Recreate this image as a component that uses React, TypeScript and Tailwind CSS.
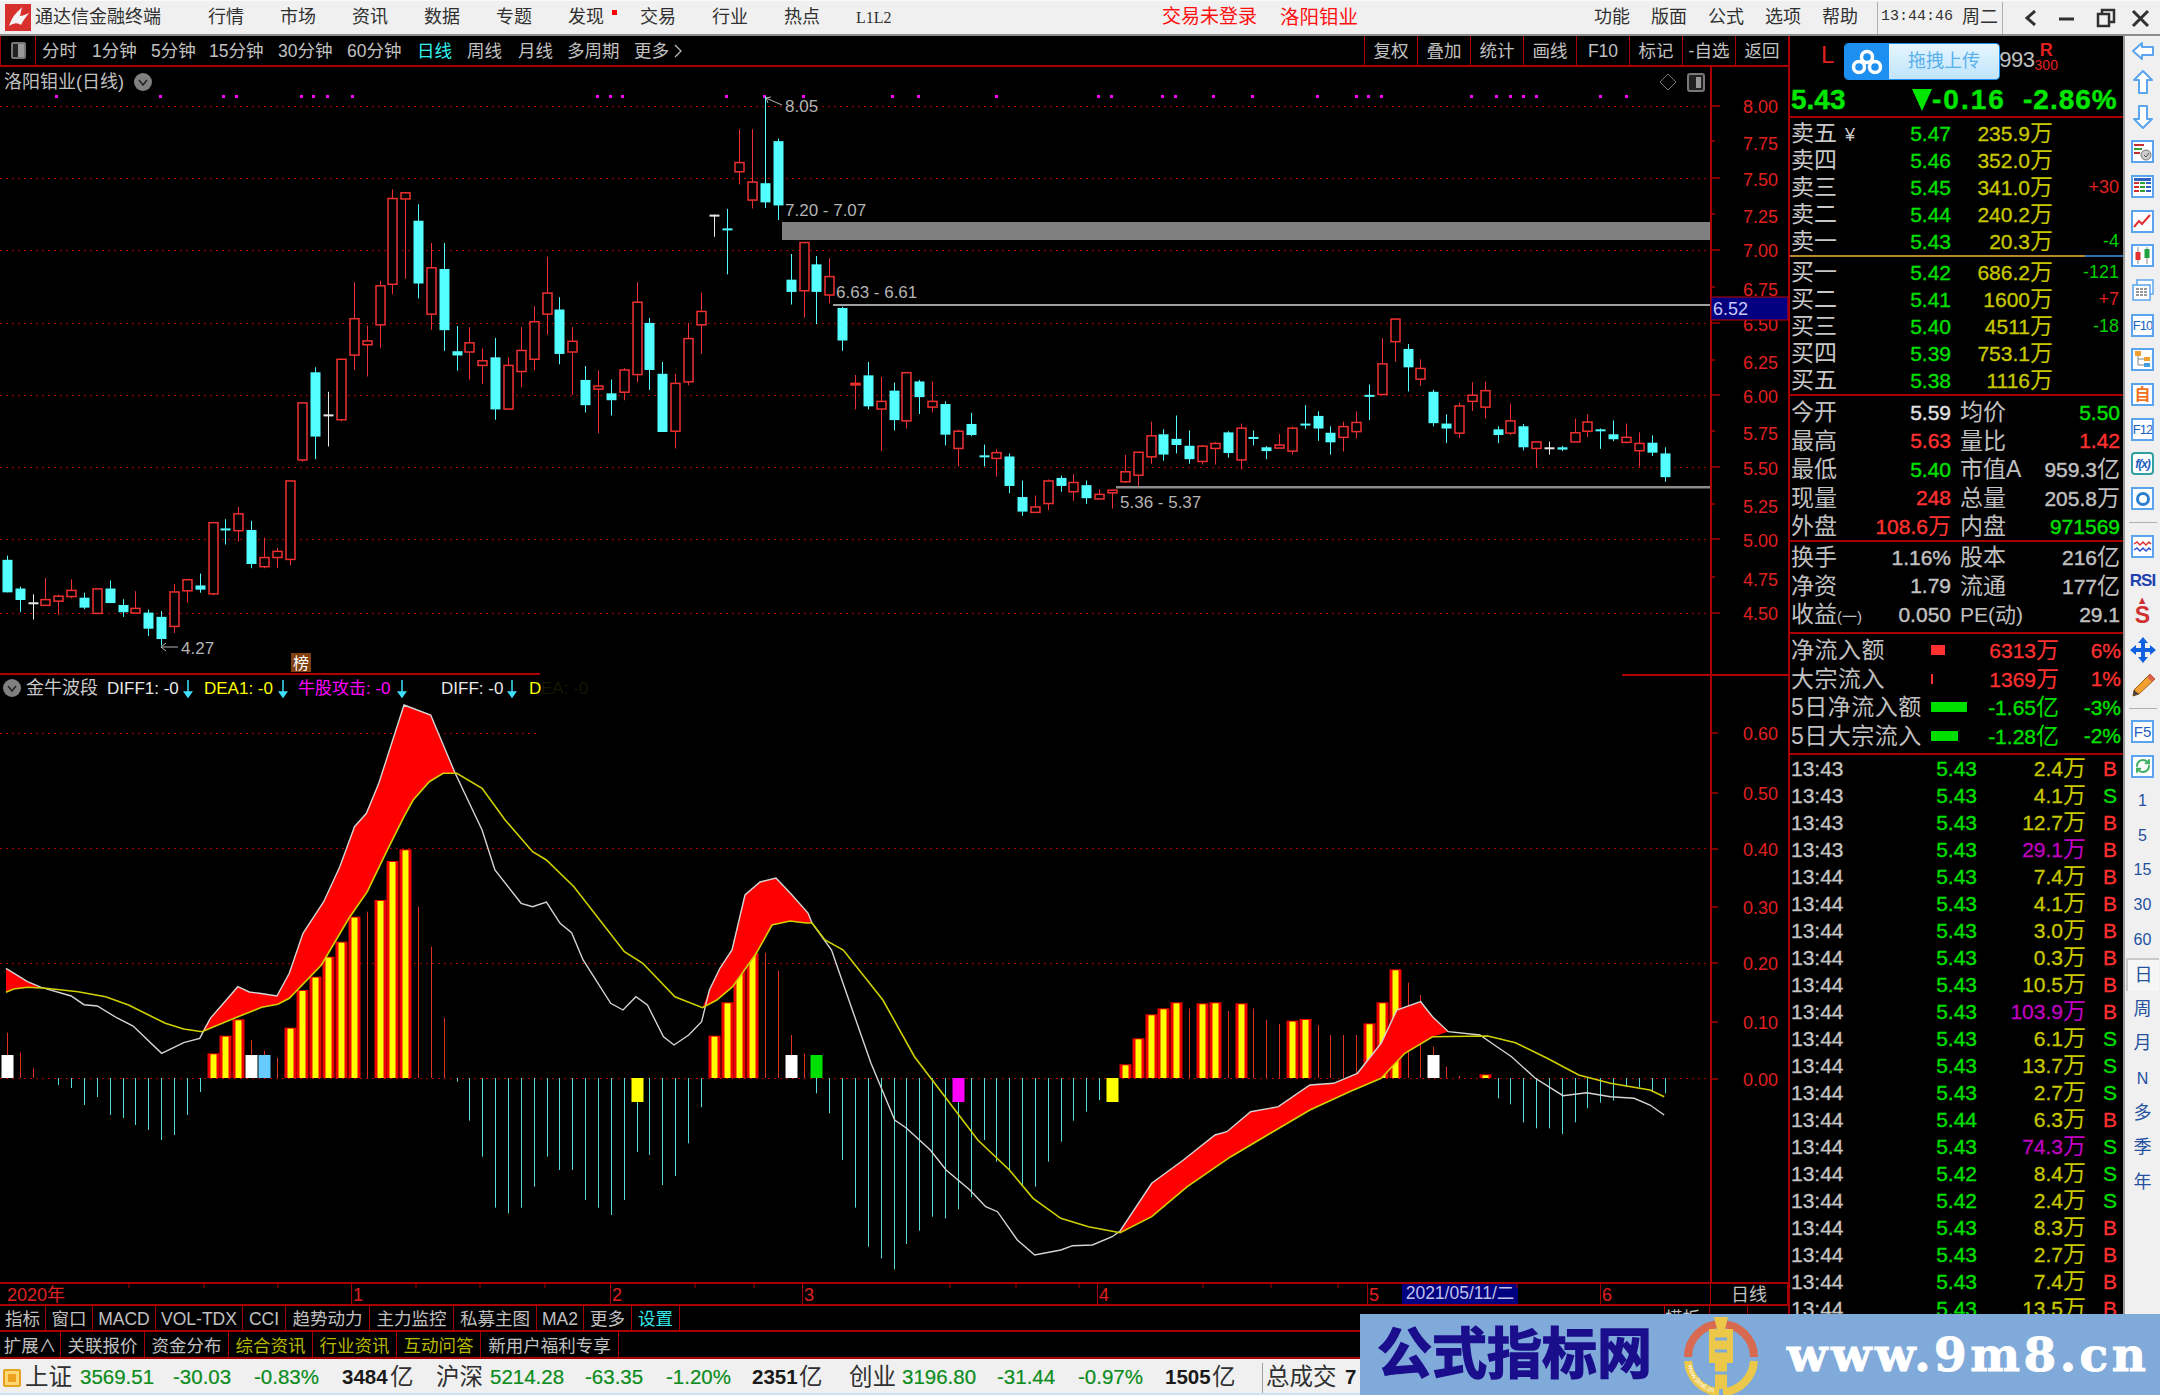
import React from 'react';
import { RefreshCw } from 'lucide-react';

type C = [string, number, number, number, number];
const candles: C[] = [
['c',1295,1306,1391,1391],['c',1376,1381,1411,1443],['w',1396,1417,1418,1462],['r',1354,1410,1425,1425],['r',1397,1401,1414,1450],['r',1357,1386,1402,1407],['c',1392,1405,1431,1435],['r',1381,1382,1446,1446],['c',1360,1381,1419,1419],['c',1409,1424,1443,1455],
['r',1388,1433,1445,1445],['c',1436,1444,1486,1505],['c',1440,1455,1513,1530],['r',1369,1390,1480,1497],['r',1357,1358,1387,1418],['c',1342,1373,1384,1392],['r',1208,1209,1395,1399],['c',1200,1224,1226,1266],['r',1168,1186,1230,1258],['c',1204,1228,1317,1328],
['r',1248,1300,1324,1328],['r',1275,1284,1300,1328],['r',1099,1100,1305,1320],['r',895,896,1045,1050],['c',803,816,984,1043],['w',867,926,928,1010],['r',781,782,940,944],['r',581,676,771,810],['r',694,734,744,827],['r',577,590,692,752],
['r',338,362,586,612],['r',346,347,363,572],['c',377,420,584,623],['r',478,543,664,705],['c',478,546,706,760],['c',695,761,772,812],['r',698,739,763,835],['r',754,786,798,847],['c',726,777,913,940],['r',777,798,912,912],
['r',698,759,814,855],['r',643,684,782,811],['r',514,609,664,718],['c',620,652,768,795],['r',698,735,763,875],['c',800,836,902,921],['r',811,852,860,975],['c',835,871,889,929],['r',805,810,868,889],['r',581,633,822,842],
['c',674,687,810,862],['c',789,820,972,972],['r',820,845,970,1015],['r',687,728,841,850],['r',608,657,692,767],['w',404,404,405,462],['c',389,440,445,560],['r',181,268,292,325],['r',181,319,366,388],['c',95,322,372,387],
['c',205,212,380,418],['c',507,574,606,639],['r',476,477,603,673],['c',512,534,606,690],['r',518,566,614,636],['c',645,648,733,760],['r',823,845,849,913],['c',789,824,905,913],['r',828,892,912,1022],['c',843,864,941,968],
['r',816,817,943,963],['c',836,840,881,925],['r',840,892,907,921],['c',892,899,979,1007],['r',966,970,1015,1062],['c',922,951,980,983],['c',1005,1033,1037,1062],['r',1017,1026,1041,1089],['c',1028,1036,1113,1132],['c',1099,1142,1180,1191],
['r',1138,1168,1182,1182],['r',1096,1100,1159,1176],['c',1086,1092,1113,1128],['r',1082,1104,1128,1152],['c',1099,1111,1145,1160],['r',1122,1135,1147,1147],['r',1123,1124,1131,1172],['r',1032,1076,1102,1105],['r',1024,1025,1085,1115],['r',945,982,1037,1055],
['c',965,978,1031,1047],['c',929,990,1006,1028],['c',968,1008,1043,1055],['r',1006,1009,1049,1057],['r',998,1002,1015,1057],['c',970,973,1027,1039],['r',950,962,1045,1070],['c',968,985,990,1007],['c',1009,1012,1022,1043],['r',977,1006,1014,1014],
['r',958,962,1022,1031],['c',902,950,953,964],['c',918,930,963,995],['c',957,974,999,1031],['r',945,958,986,1023],['r',918,947,971,989],['c',848,875,880,941],['r',727,794,874,875],['r',676,677,736,788],['c',742,755,803,866],
['r',782,806,834,851],['c',862,867,949,957],['c',926,950,963,1001],['r',895,904,975,988],['r',842,876,892,917],['r',840,864,907,937],['c',957,965,980,1001],['r',898,943,975,980],['c',951,957,1012,1020],['r',998,998,1015,1065],
['w',997,1012,1013,1031],['c',1008,1012,1018,1022],['r',937,974,998,998],['r',926,946,970,985],['c',963,965,968,1016],['c',942,978,991,996],['r',950,986,999,1002],['r',973,1002,1021,1063],['c',981,1000,1026,1035],['c',1012,1028,1090,1102],
];
const cxr = (i: number) => 6.9 + i * 12.85;
const cx = (i: number) => Math.round(cxr(i)) + 0.5;
const yz = (z: number) => 60 + z / 2.613;

const z9 = (a: number[][]) => a.map(([x, y]) => [x / 2.178, 640 + y / 3]);
const z12 = (a: number[][]) => a.map(([x, y]) => [440 + x / 1.2645, 950 + y / 3]);

const W: number[][] = [
  ...z9([[13,985],[60,1025],[90,1042],[155,1068],[183,1094],[212,1098],[255,1134],[290,1158],[352,1240],[400,1208],[435,1195],[458,1135],[518,1040],[543,1056],[565,1060],[603,1068],[630,1000],[660,880],[705,785],[740,680],[772,560],[798,520],[825,430],[880,195],[938,225],[990,395],[1050,570],[1078,690],[1135,790],[1160,800],[1190,786],[1220,850],[1245,878],[1270,960],[1330,1090],[1357,1110],[1385,1070],[1410,1095],[1445,1190],[1468,1215],[1500,1185],[1528,1145],[1545,1050],[1568,985]]),
  [732,950],[745,895],[760,882],[776,878],[792,895],[808,913],[812,923],
  ...z12([[495,0],[520,170],[545,340],[575,510],[590,535],[620,600],[640,660],[670,720],[690,770],[705,785],[730,870],[752,915],[785,900],[800,887],[825,885],[850,860],[860,843],[900,700],[940,630],[980,555],[995,545],[1025,485],[1060,470],[1100,405],[1130,400],[1160,370],[1190,280],[1210,180],[1240,155],[1255,200],[1275,245],[1315,255],[1330,280],[1355,320],[1385,385],[1420,437],[1450,428],[1480,440],[1510,445],[1530,465],[1548,495]]),
];
const Yl: number[][] = [
  ...z9([[13,1057],[30,1047],[60,1042],[100,1045],[170,1055],[230,1070],[280,1095],[360,1150],[400,1167],[440,1175],[510,1135],[570,1102],[605,1093],[630,1075],[700,975],[760,835],[800,755],[840,640],[880,530],[900,480],[935,425],[965,400],[995,400],[1050,445],[1100,540],[1160,635],[1190,660],[1250,740],[1360,935],[1400,970],[1470,1070],[1530,1103]]),
  ...z12([[350,150],[370,110],[400,10]]),
  [772,925],[790,921],[806,923],[812,923],[825,940],
  ...z12([[510,0],[560,150],[600,320],[640,445],[680,570],[720,660],[750,745],[785,805],[820,830],[860,848],[900,800],[945,710],[1000,620],[1050,550],[1100,480],[1150,425],[1190,385],[1220,310],[1255,260],[1325,258],[1360,278],[1400,325],[1440,375],[1480,400],[1530,420],[1548,440]]),
];
const pts = (a: number[][]) => a.map((p) => p[0].toFixed(1) + ',' + p[1].toFixed(1)).join(' ');
const band = (a: number, b: number) =>
  pts([...W.filter((p) => p[0] >= a && p[0] <= b), ...Yl.filter((p) => p[0] >= a && p[0] <= b).reverse()]);

const y12 = (z: number) => 950 + z / 3;
const y9 = (z: number) => 640 + z / 3;
const ZERO = 1078;
const ryBars: number[][] = [
  [16,y9(1240)],[17,y9(1187)],[18,y9(1138)],[22,y9(1163)],[23,y9(1050)],[24,y9(1010)],[25,y9(950)],[26,y9(905)],[27,y9(830)],[29,y9(780)],[30,y9(663)],[31,y9(628)],
  [55,y12(257)],[56,y12(157)],[57,y12(60)],[58,y12(10)],[87,y12(343)],[88,y12(265)],[89,y12(193)],[90,y12(175)],[91,y12(157)],[93,y12(160)],[94,y12(157)],[96,y12(160)],[100,y12(212)],[101,y12(207)],[106,y12(220)],[107,y12(157)],[108,y12(58)],[115,y12(373)],
];
const thinRed: number[][] = [
  [0,y9(1178)],[1,y9(1237)],[2,y9(1285)],[19,y9(1200)],[20,y9(1232)],[21,y9(1253)],[28,y9(815)],[32,y9(800)],[33,y9(920)],[34,y9(1133)],
  [59,y12(8)],[60,y12(62)],[61,y12(255)],[62,y12(310)],[92,y12(175)],[95,y12(183)],[97,y12(175)],[98,y12(210)],[99,y12(222)],[102,y12(225)],[103,y12(255)],[104,y12(255)],[105,y12(255)],[109,y12(98)],[110,y12(135)],[111,y12(290)],[112,y12(350)],[113,y12(378)],
];
const cyanBars: number[][] = [
  [4,1085],[5,1088],[6,1105],[7,1097],[8,1115],[9,1118],[10,1125],[11,1130],[12,1140],[13,1135],[14,1115],[15,1092],
  ...[[35,395],[36,512],[37,620],[38,773],[39,790],[40,773],[41,710],[42,620],[43,660],[44,660],[45,750],[46,773],[47,795],[48,750],[49,606],[50,615],[51,705],[52,678],[53,580],[54,472],[63,430],[64,490],[65,630],[66,773],[67,890],[68,925],[69,958],[70,882],[71,842],[72,800],[73,805],[74,778],[75,742],[76,570],[77,635],[78,660],[79,705],[80,710],[81,635],[82,575],[83,512],[84,485],[85,450],[116,445],[117,463],[118,517],[119,535],[120,535],[121,552],[122,517],[123,475],[124,458],[125,452],[126,410],[127,412],[128,423],[129,430]].map(([i, z]) => [i, y12(z)]),
];

const dots = [56,160,223,236,301,313,327,352,597,610,622,725.5,763.6,802.6,892,918,996,1098,1111,1162,1175,1213,1252,1317,1356,1368,1381,1471,1496,1510,1522.6,1536,1600,1626];
const priceLabels: [string, number][] = [['8.00',106],['7.75',143],['7.50',179],['7.25',216],['7.00',250],['6.75',289],['6.50',324],['6.25',362],['6.00',396],['5.75',433],['5.50',468],['5.25',506],['5.00',540],['4.75',579],['4.50',613]];
const subLabels: [string, number][] = [['0.60',733],['0.50',793],['0.40',849],['0.30',907],['0.20',963],['0.10',1022],['0.00',1079]];
const majors = [106,178,250,323,395,467,539,613];

function Chart() {
  return (
    <svg width={1788} height={1215} viewBox="0 67 1788 1215" className="block shrink-0">
      {[...majors,848,963,1078].map((y) => (
        <line key={y} x1={0} x2={1711} y1={y + 0.5} y2={y + 0.5} stroke="#a80000" strokeWidth={1} strokeDasharray="2 4" />
      ))}
      <line x1={0} x2={540} y1={733.5} y2={733.5} stroke="#a80000" strokeDasharray="2 4" />
      {dots.map((x) => <rect key={x} x={Math.round(x) - 1} y={95} width={3} height={3} fill="#ff00ff" />)}

      <text x={4} y={88} fill="#c0c0c0" fontSize={18}>洛阳钼业(日线)</text>
      <circle cx={143} cy={82} r={9} fill="#808080" />
      <polyline points="139,80 143,85 147,80" fill="none" stroke="#222" strokeWidth={1.5} />
      <path d="M1668 74 L1676 82 L1668 90 L1660 82 Z" fill="none" stroke="#777" />
      <rect x={1688} y={74} width={16} height={17} rx={2} fill="#222" stroke="#777" strokeWidth={2} />
      <rect x={1696} y={77} width={5} height={11} fill="#999" />

      <rect x={782} y={222} width={929} height={18} fill="#808080" />
      <rect x={833} y={304} width={878} height={2} fill="#a0a0a0" />
      <rect x={1116} y={486} width={595} height={2.5} fill="#8c8c8c" />
      <text x={785} y={216} fill="#b4b4b4" fontSize={17}>7.20 - 7.07</text>
      <text x={836} y={298} fill="#b4b4b4" fontSize={17}>6.63 - 6.61</text>
      <text x={1120} y={508} fill="#b4b4b4" fontSize={17}>5.36 - 5.37</text>
      <text x={785} y={112} fill="#b4b4b4" fontSize={17}>8.05</text>
      <text x={181} y={654} fill="#b4b4b4" fontSize={17}>4.27</text>
      <path d="M782 105 L766 98 M766 98 L771 97 M766 98 L768 103" stroke="#b4b4b4" fill="none" />
      <path d="M178 647 L161 647 M161 647 L166 643 M161 647 L166 651" stroke="#b4b4b4" fill="none" />
      <rect x={291} y={653} width={20} height={19} fill="#80400f" />
      <text x={293} y={669} fill="#fff" fontSize={16}>榜</text>

      {candles.map(([t, hi, top, bot, lo], i) => {
        const x = cx(i);
        const color = t === 'r' ? '#f03030' : t === 'c' ? '#54ffff' : '#e8e8e8';
        const yh = yz(hi), yt = yz(top), yb = yz(bot), yl = yz(lo);
        return (
          <g key={i}>
            <line x1={x} x2={x} y1={yh} y2={t === 'r' ? yt : yl} stroke={color} strokeWidth={1} />
            {t === 'r' && <line x1={x} x2={x} y1={yb} y2={yl} stroke={color} strokeWidth={1} />}
            {t === 'r'
              ? <rect x={x - 4.5} y={yt} width={9} height={Math.max(yb - yt, 1.5)} fill="#000" stroke={color} strokeWidth={1.5} />
              : <rect x={x - 5} y={yt} width={10} height={Math.max(yb - yt, 2)} fill={color} />}
          </g>
        );
      })}

      {/* price axis */}
      <line x1={1711} x2={1711} y1={67} y2={1282} stroke="#a80000" strokeWidth={2} />
      {priceLabels.map(([s, y], i) => {
        const ty = i % 2 === 0 ? majors[i / 2] : y - 2;
        return (
          <g key={s}>
            <line x1={1711} x2={i % 2 === 0 ? 1720 : 1715} y1={ty} y2={ty} stroke="#a80000" strokeWidth={1.5} />
            <text x={1743} y={y + 7} fill="#e02020" fontSize={18}>{s}</text>
          </g>
        );
      })}
      {subLabels.map(([s, y]) => (
        <g key={s}>
          <line x1={1711} x2={1718} y1={y} y2={y} stroke="#a80000" strokeWidth={1.5} />
          <text x={1743} y={y + 7} fill="#e02020" fontSize={18}>{s}</text>
        </g>
      ))}
      <rect x={1711} y={297} width={77} height={23} fill="#000080" stroke="#c00000" />
      <text x={1713} y={315} fill="#c8c8ff" fontSize={18}>6.52</text>

      {/* indicator */}
      <line x1={0} x2={540} y1={674} y2={674} stroke="#b00000" strokeWidth={2} />
      <line x1={1622} x2={1788} y1={675} y2={675} stroke="#b00000" strokeWidth={2} />
      <circle cx={12} cy={688} r={9} fill="#808080" />
      <polyline points="8,686 12,691 16,686" fill="none" stroke="#222" strokeWidth={1.5} />
      <text x={26} y={694} fill="#c8c8c8" fontSize={18}>金牛波段</text>
      <text x={107} y={694} fill="#e8e8e8" fontSize={17}>DIFF1: -0</text>
      <text x={204} y={694} fill="#ffff00" fontSize={17}>DEA1: -0</text>
      <text x={298} y={694} fill="#ff00ff" fontSize={17}>牛股攻击: -0</text>
      <text x={441} y={694} fill="#e8e8e8" fontSize={17}>DIFF: -0</text>
      <text x={529} y={694} fill="#ffff00" fontSize={17}>D</text>
      <text x={541} y={694} fill="#161600" fontSize={17}>EA: -0</text>
      {[188,283,402,512].map((x) => (
        <path key={x} d={`M${x} 680 V696 M${x - 3.5} 692 L${x} 697 L${x + 3.5} 692 Z`} stroke="#40e0ff" fill="#40e0ff" strokeWidth={1.5} />
      ))}

      {cyanBars.map(([i, b]) => <line key={'c' + i} x1={cx(i)} x2={cx(i)} y1={ZERO} y2={b} stroke="#54dcdc" />)}
      {thinRed.map(([i, t]) => <line key={'t' + i} x1={cx(i)} x2={cx(i)} y1={t} y2={ZERO} stroke="#e03020" />)}
      {ryBars.map(([i, t]) => (
        <g key={'b' + i}>
          <rect x={cx(i) - 6} y={t} width={12} height={ZERO - t} fill="#f00000" />
          <rect x={cx(i) - 3} y={t + 1} width={6} height={ZERO - t - 1} fill="#ffff00" />
        </g>
      ))}
      {[0,19,61,111].map((i) => <rect key={i} x={cx(i) - 6} y={y12(315)} width={12} height={ZERO - y12(315)} fill="#fff" />)}
      <rect x={cx(20) - 6} y={y12(315)} width={12} height={ZERO - y12(315)} fill="#66ccff" />
      <rect x={cx(63) - 6} y={y12(315)} width={12} height={ZERO - y12(315)} fill="#00e000" />
      {[49,86].map((i) => <rect key={i} x={cx(i) - 6} y={ZERO} width={12} height={24} fill="#ffff00" />)}
      <rect x={cx(74) - 6} y={ZERO} width={12} height={24} fill="#ff00ff" />

      <polygon points={band(5, 42)} fill="#ff0000" />
      <polygon points={band(201, 458)} fill="#ff0000" />
      <polygon points={band(702, 812)} fill="#ff0000" />
      <polygon points={band(1119, 1449)} fill="#ff0000" />
      <polyline points={pts(W)} fill="none" stroke="#d4d4d4" strokeWidth={1.4} />
      <polyline points={pts(Yl)} fill="none" stroke="#d0d000" strokeWidth={1.6} />
    </svg>
  );
}

const Wan = ({ t }: { t: string }) => {
  const last = t.slice(-1);
  if (/[万亿]/.test(last)) return <>{t.slice(0, -1)}<span className="text-[23px] [-webkit-text-stroke:0px]">{last}</span></>;
  return <>{t}</>;
};

const book: [string, string, string, string, string][] = [
  ['卖五','5.47','235.9万','',''],['卖四','5.46','352.0万','',''],['卖三','5.45','341.0万','+30','r'],['卖二','5.44','240.2万','',''],['卖一','5.43','20.3万','-4','g'],
];
const book2: [string, string, string, string, string][] = [
  ['买一','5.42','686.2万','-121','g'],['买二','5.41','1600万','+7','r'],['买三','5.40','4511万','-18','g'],['买四','5.39','753.1万','',''],['买五','5.38','1116万','',''],
];

function BookRow({ r }: { r: [string, string, string, string, string] }) {
  return (
    <div className="flex items-center h-[27px] pl-[1px] whitespace-nowrap">
      <span className="w-[65px] text-[23px] text-[#c8c8c8]">{r[0]}{r[0] === '卖五' && <span className="ml-[8px] text-[18px]">¥</span>}</span>
      <span className="w-[95px] text-right text-[21px] text-[#00e000] [-webkit-text-stroke:0.3px]">{r[1]}</span>
      <span className="w-[102px] text-right text-[21px] text-[#c8c800] [-webkit-text-stroke:0.3px]"><Wan t={r[2]} /></span>
      <span className={r[4] === 'r' ? 'w-[66px] text-right text-[18px] text-[#e02020]' : 'w-[66px] text-right text-[18px] text-[#00d000]'}>{r[3]}</span>
    </div>
  );
}

const vc: Record<string, string> = {
  w: 'text-[#e0e0e0]', r: 'text-[#ff3030]', g: 'text-[#00e000]', n: 'text-[#c0c0c0]',
};
const stats1: [string, string, string, string, string, string][] = [
  ['今开','5.59','w','均价','5.50','g'],['最高','5.63','r','量比','1.42','r'],['最低','5.40','g','市值A','959.3亿','n'],['现量','248','r','总量','205.8万','n'],['外盘','108.6万','r','内盘','971569','g'],
];
const stats2: [string, string, string, string, string, string][] = [
  ['换手','1.16%','n','股本','216亿','n'],['净资','1.79','n','流通','177亿','n'],['收益(一)','0.050','n','PE(动)','29.1','n'],
];
function StatRow({ r }: { r: [string, string, string, string, string, string] }) {
  return (
    <div className="flex items-center h-[28.5px] pl-[1px] whitespace-nowrap">
      <span className="w-[72px] text-[23px] text-[#c0c0c0]">{r[0] === '收益(一)' ? <>收益<span className="text-[15px]">(一)</span></> : r[0]}</span>
      <span className={'w-[88px] text-right text-[21px] [-webkit-text-stroke:0.4px] ' + vc[r[2]]}><Wan t={r[1]} /></span>
      <span className="w-[80px] ml-[9px] text-[23px] text-[#c0c0c0]">{r[3] === 'PE(动)' ? <span className="text-[21px]">PE(动)</span> : r[3]}</span>
      <span className={'w-[80px] text-right text-[21px] [-webkit-text-stroke:0.4px] ' + vc[r[5]]}><Wan t={r[4]} /></span>
    </div>
  );
}
const flows: [string, string, string, string, string][] = [
  ['净流入额','w-[14px] bg-[#ff3030]','6313万','6%','r'],
  ['大宗流入','w-[1.5px] bg-[#ff3030]','1369万','1%','r'],
  ['5日净流入额','w-[36px] bg-[#00e000]','-1.65亿','-3%','g'],
  ['5日大宗流入','w-[27px] bg-[#00e000]','-1.28亿','-2%','g'],
];
const ticks: [string, string, string, string, string?][] = [
  ['13:43','5.43','2.4万','B'],['13:43','5.43','4.1万','S'],['13:43','5.43','12.7万','B'],['13:43','5.43','29.1万','B','p'],['13:44','5.43','7.4万','B'],['13:44','5.43','4.1万','B'],['13:44','5.43','3.0万','B'],['13:44','5.43','0.3万','B'],['13:44','5.43','10.5万','B'],['13:44','5.43','103.9万','B','p'],['13:44','5.43','6.1万','S'],['13:44','5.43','13.7万','S'],['13:44','5.43','2.7万','S'],['13:44','5.44','6.3万','B'],['13:44','5.43','74.3万','S','p'],['13:44','5.42','8.4万','S'],['13:44','5.42','2.4万','S'],['13:44','5.43','8.3万','B'],['13:44','5.43','2.7万','B'],['13:44','5.43','7.4万','B'],['13:44','5.43','13.5万','B'],
];

function RightPanel() {
  return (
    <div className="w-[335px] shrink-0 h-[1323px] overflow-hidden border-l-2 border-[#a80000] bg-black">
      <div className="flex h-[48px] whitespace-nowrap">
        <span className="ml-[31px] mt-[5px] text-[24px] leading-[28px] text-[#e02020]">L</span>
        <span className="ml-[165px] mt-[11px] text-[22px] leading-[26px] tracking-[-0.5px] text-[#c0c0c0]">993</span>
        <div className="ml-[0px] mt-[5px] flex flex-col items-center leading-none">
          <span className="text-[18px] font-bold text-[#e02020]">R</span>
          <span className="text-[14px] -mt-[1px] text-[#e02020]">300</span>
        </div>
      </div>
      <div className="flex items-center h-[34px] pl-[1px] whitespace-nowrap font-bold text-[28px] text-[#00e600] border-b-2 border-[#a80000] [-webkit-text-stroke:0.4px]">
        <span className="w-[121px]">5.43</span>
        <span className="w-0 h-0 border-l-[10px] border-r-[10px] border-t-[22px] border-l-transparent border-r-transparent border-t-[#00e600]"></span>
        <span className="w-[70px] tracking-[2px]">-0.16</span>
        <span className="ml-[21px] tracking-[1px]">-2.86%</span>
      </div>
      <div className="pt-[2px]">{book.map((r) => <BookRow key={r[0]} r={r} />)}</div>
      <div className="flex h-[2px]"><div className="w-[295px] bg-[#b8862d]"></div><div className="flex-1 bg-[#2a6fb0]"></div></div>
      <div className="pt-[2px] h-[139px] border-b-2 border-[#a80000]">{book2.map((r) => <BookRow key={r[0]} r={r} />)}</div>
      <div className="h-[146px] pt-[2px] border-b-2 border-[#a80000]">{stats1.map((r) => <StatRow key={r[0]} r={r} />)}</div>
      <div className="h-[92px] pt-[1px] border-b-2 border-[#a80000]">{stats2.map((r) => <StatRow key={r[0]} r={r} />)}</div>
      <div className="h-[121px] pt-[2px] border-b-2 border-[#a80000]">
        {flows.map((f) => (
          <div key={f[0]} className="flex items-center h-[28.5px] pl-[1px] whitespace-nowrap">
            <span className="w-[140px] text-[23px] text-[#c0c0c0] tracking-[0.5px]">{f[0]}</span>
            <span className="w-[50px] flex items-center"><span className={'h-[10px] block ' + f[1]}></span></span>
            <span className={'w-[78px] text-right text-[21px] [-webkit-text-stroke:0.3px] ' + (f[4] === 'r' ? vc.r : vc.g)}><Wan t={f[2]} /></span>
            <span className={'w-[62px] text-right text-[21px] [-webkit-text-stroke:0.3px] ' + (f[4] === 'r' ? vc.r : vc.g)}>{f[3]}</span>
          </div>
        ))}
      </div>
      <div>
        {ticks.map((t, i) => (
          <div key={i} className="flex items-center h-[27px] pl-[1px] whitespace-nowrap text-[21px] [-webkit-text-stroke:0.3px]">
            <span className="w-[91px] text-[#c4c4c4]">{t[0]}</span>
            <span className="w-[95px] text-right text-[#00e000]">{t[1]}</span>
            <span className={'w-[109px] text-right ' + (t[4] ? 'text-[#c000c0]' : 'text-[#c8c800]')}><Wan t={t[2]} /></span>
            <span className={'w-[31px] text-right ' + (t[3] === 'B' ? 'text-[#ff3030]' : 'text-[#00e000]')}>{t[3]}</span>
          </div>
        ))}
      </div>
    </div>
  );
}

const Box = ({ children, cls }: { children: React.ReactNode; cls?: string }) => (
  <div className={'w-[23px] h-[23px] border-2 border-[#5aa5ee] bg-white flex items-center justify-center overflow-hidden ' + (cls || '')}>{children}</div>
);
const Cell = ({ children, first }: { children: React.ReactNode; first?: boolean }) => (
  <div className={(first ? 'h-[29px]' : 'h-[34.7px]') + ' flex items-center justify-center shrink-0'}>{children}</div>
);
const Sep = ({ cls }: { cls: string }) => <div className={cls + ' flex items-center justify-center shrink-0'}><div className="w-[28px] h-[1px] bg-[#b0b0b0]"></div></div>;
const Num = ({ t }: { t: string }) => <Cell><span className="text-[16px] text-[#2450a0]">{t}</span></Cell>;
const Cj = ({ t }: { t: string }) => <Cell><span className="text-[18px] text-[#2450a0]">{t}</span></Cell>;

function Sidebar() {
  return (
    <div className="w-[37px] shrink-0 h-[1323px] bg-[#f0f0f0] border-l-2 border-[#9a9a9a] flex flex-col">
      <Cell first><svg width="24" height="24" viewBox="0 0 24 24"><path d="M2 12 L11 4 V8 H22 V16 H11 V20 Z" fill="#fff" stroke="#5aa5ee" strokeWidth="2" strokeLinejoin="round" /></svg></Cell>
      <Cell><svg width="24" height="26" viewBox="0 0 24 26"><path d="M12 2 L21 11 H16 V24 H8 V11 H3 Z" fill="#fff" stroke="#5aa5ee" strokeWidth="2" strokeLinejoin="round" /></svg></Cell>
      <Cell><svg width="24" height="26" viewBox="0 0 24 26"><path d="M12 24 L21 15 H16 V2 H8 V15 H3 Z" fill="#fff" stroke="#5aa5ee" strokeWidth="2" strokeLinejoin="round" /></svg></Cell>
      <Cell><Box><svg width="19" height="19" viewBox="0 0 19 19"><rect x="1" y="2" width="10" height="2" fill="#c03030" /><rect x="1" y="6" width="8" height="2" fill="#30a030" /><rect x="1" y="10" width="6" height="2" fill="#c03030" /><circle cx="13" cy="13" r="5" fill="#ccc" stroke="#777" /><path d="M11 13 L13 15 L16 11" stroke="#555" fill="none" /></svg></Box></Cell>
      <Cell><Box><svg width="19" height="19" viewBox="0 0 19 19"><rect x="1" y="1" width="17" height="3" fill="#3060c0" /><rect x="1" y="5" width="5" height="2" fill="#d03030" /><rect x="7" y="5" width="5" height="2" fill="#30a030" /><rect x="13" y="5" width="5" height="2" fill="#3060c0" /><rect x="1" y="9" width="5" height="2" fill="#d03030" /><rect x="7" y="9" width="5" height="2" fill="#30a030" /><rect x="13" y="9" width="5" height="2" fill="#3060c0" /><rect x="1" y="13" width="5" height="2" fill="#d03030" /><rect x="7" y="13" width="5" height="2" fill="#30a030" /><rect x="13" y="13" width="5" height="2" fill="#3060c0" /></svg></Box></Cell>
      <Cell><Box><svg width="19" height="19" viewBox="0 0 19 19"><polyline points="1,15 6,9 9,12 17,3" fill="none" stroke="#e03030" strokeWidth="2" /></svg></Box></Cell>
      <Cell><Box><svg width="19" height="19" viewBox="0 0 19 19"><path d="M5 1V18M14 1V18" stroke="#888" /><rect x="2.5" y="6" width="5" height="8" fill="#e03030" /><rect x="11.5" y="3" width="5" height="9" fill="#20a040" /></svg></Box></Cell>
      <Cell><svg width="24" height="24" viewBox="0 0 24 24"><rect x="6" y="2" width="16" height="14" fill="#fff" stroke="#5aa5ee" strokeWidth="1.5" /><rect x="2" y="7" width="17" height="15" fill="#fff" stroke="#5aa5ee" strokeWidth="1.5" /><path d="M5 11H16M5 14H16M5 17H16" stroke="#777" strokeWidth="1.5" strokeDasharray="3 1" /></svg></Cell>
      <Cell><Box><span className="text-[13px] leading-none text-[#2060c0] tracking-[-1px]">F10</span></Box></Cell>
      <Cell><Box><svg width="19" height="19" viewBox="0 0 19 19"><rect x="2" y="1" width="6" height="5" fill="#f0a030" /><rect x="11" y="7" width="6" height="4" fill="#f0a030" /><rect x="11" y="13" width="6" height="4" fill="#40a0e0" /><path d="M5 6V15H11M5 9H11" stroke="#888" fill="none" /></svg></Box></Cell>
      <Cell><Box><span className="text-[16px] leading-none font-bold text-[#f07020]">自</span></Box></Cell>
      <Cell><Box><span className="text-[13px] leading-none text-[#2060c0] tracking-[-1px]">F12</span></Box></Cell>
      <Cell><Box cls="rounded-[4px] border-[#30a0a0]"><span className="text-[12px] leading-none italic font-bold text-[#2060c0] tracking-[-1px]">f(x)</span></Box></Cell>
      <Cell><Box><span className="block w-[14px] h-[14px] rounded-full border-[3px] border-[#2f7fd0]"></span></Box></Cell>
      <Sep cls="h-[13px]" />
      <Cell><Box><svg width="19" height="19" viewBox="0 0 19 19"><polyline points="1,7 4,5 7,8 10,5 13,8 16,5 18,7" fill="none" stroke="#e03030" strokeWidth="1.5" /><polyline points="1,13 4,11 7,14 10,11 13,14 16,11 18,13" fill="none" stroke="#3050d0" strokeWidth="1.5" /></svg></Box></Cell>
      <Cell><span className="text-[17px] font-bold leading-none text-[#2040b0] tracking-[-1px]">RSI</span></Cell>
      <Cell><span className="relative text-[23px] font-bold leading-none text-[#d03030]">S<span className="absolute left-[2px] top-[-9px] text-[11px]">▲</span></span></Cell>
      <Cell><svg width="28" height="28" viewBox="0 0 28 28"><path d="M14 1 L19 7 H16 V12 H21 V9 L27 14 L21 19 V16 H16 V21 H19 L14 27 L9 21 H12 V16 H7 V19 L1 14 L7 9 V12 H12 V7 H9 Z" fill="#1060e0" /></svg></Cell>
      <Cell><svg width="26" height="26" viewBox="0 0 26 26"><path d="M20 2 L25 7 L9 22 L3 24 L4 18 Z" fill="#f0a030" stroke="#a06010" /><path d="M20 2 L25 7 L22 10 L17 5 Z" fill="#e06050" /><path d="M3 24 L4 18 L9 22 Z" fill="#444" /></svg></Cell>
      <Sep cls="h-[12px]" />
      <Cell><Box><span className="text-[15px] leading-none text-[#2060c0]">F5</span></Box></Cell>
      <Cell><Box><RefreshCw size={16} strokeWidth={3} color="#40b060" /></Box></Cell>
      <Num t="1" /><Num t="5" /><Num t="15" /><Num t="30" /><Num t="60" />
      <Cell><div className="w-[33px] h-[33px] flex items-center justify-center border-t-2 border-l-2 border-[#c8c8c8] bg-[#f6f6f6] text-[18px] text-[#2450a0]">日</div></Cell>
      <Cj t="周" /><Cj t="月" /><Num t="N" /><Cj t="多" /><Cj t="季" /><Cj t="年" />
    </div>
  );
}

function TitleBar() {
  const menu = ['行情','市场','资讯','数据','专题'];
  const menu2 = ['功能','版面','公式','选项','帮助'];
  return (
    <div className="flex items-center h-[36px] bg-[#f0f0f0] border-t border-[#fafafa] border-b-2 border-b-[#8c8c8c] text-[18px] text-[#303030] whitespace-nowrap">
      <svg width="26" height="27" viewBox="0 0 26 27" className="ml-[5px] shrink-0"><rect width="26" height="27" fill="#d8302c" /><path d="M17 3 C13 8 8 10 4 22 C10 18 13 19 16 21 C19 15 22 12 24 9 C20 11 17 12 15 12 Z" fill="#f4f4f4" /></svg>
      <span className="ml-[4px] w-[126px]">通达信金融终端</span>
      <div className="flex gap-[36px] ml-[47px]">{menu.map((m) => <span key={m} className="w-[36px]">{m}</span>)}</div>
      <span className="ml-[36px] w-[36px]">发现</span>
      <span className="w-[5px] h-[5px] mb-[10px] ml-[8px] bg-[#ff0000]"></span>
      <span className="ml-[23px] w-[36px]">交易</span>
      <span className="ml-[36px] w-[36px]">行业</span>
      <span className="ml-[36px] w-[36px]">热点</span>
      <span className="ml-[36px] w-[36px] font-['Liberation_Serif',serif] text-[16px]">L1L2</span>
      <span className="ml-[270px] text-[19px] text-[#ff1010]">交易未登录</span>
      <span className="ml-[23px] text-[19.5px] text-[#ff1010]">洛阳钼业</span>
      <div className="flex gap-[21px] ml-auto">{menu2.map((m) => <span key={m} className="w-[36px]">{m}</span>)}</div>
      <span className="ml-[19px] h-[32px] border-l border-[#b0b0b0]"></span>
      <span className="ml-[3px] w-[78px] font-['Liberation_Mono',monospace] text-[15px]">13:44:46</span>
      <span className="ml-[3px] w-[40px]">周二</span>
      <span className="h-[32px] border-l border-[#b0b0b0]"></span>
      <svg width="150" height="30" viewBox="0 0 150 30" className="shrink-0 mr-[7px]" stroke="#303030" fill="none">
        <polyline points="32,8 24,15 32,22" strokeWidth="3" />
        <line x1="56" x2="71" y1="16" y2="16" strokeWidth="3" />
        <rect x="95" y="11" width="11" height="12" strokeWidth="2.5" />
        <path d="M99 11 V7 H111 V19 H106" strokeWidth="2.5" />
        <path d="M130 8 L145 23 M145 8 L130 23" strokeWidth="3" />
      </svg>
    </div>
  );
}

function Toolbar() {
  const items: [string, string][] = [
    ['分时','w-[50px]'],['1分钟','w-[59px]'],['5分钟','w-[58px]'],['15分钟','w-[69px]'],['30分钟','w-[69px]'],['60分钟','w-[70px]'],['日线','w-[50px]'],['周线','w-[51px]'],['月线','w-[49px]'],['多周期','w-[67px]'],
  ];
  const r = ['复权','叠加','统计','画线','F10','标记','-自选','返回'];
  return (
    <div className="flex items-stretch h-[31px] border-b-2 border-[#a80000] text-[17.5px] text-[#c0c0c0] whitespace-nowrap">
      <div className="w-[36px] shrink-0 border-x border-[#a80000] flex items-center justify-center">
        <div className="w-[15px] h-[17px] rounded-[2px] border-2 border-[#777] bg-[#222] flex justify-end"><div className="w-[6px] bg-[#999]"></div></div>
      </div>
      <div className="flex items-center ml-[6px] pt-[1px]">
        {items.map(([t, w]) => <span key={t} className={w + (t === '日线' ? ' text-[#30f0f0]' : '')}>{t}</span>)}
        <span className="flex items-center">更多<svg width="10" height="16" viewBox="0 0 10 16" className="ml-[4px]"><polyline points="2,2 8,8 2,14" fill="none" stroke="#c0c0c0" strokeWidth="1.2" /></svg></span>
      </div>
      <div className="ml-auto flex items-stretch">
        {r.map((t) => <span key={t} className="w-[53px] pt-[1px] flex items-center justify-center border-l border-[#a80000]">{t}</span>)}
      </div>
    </div>
  );
}

function Timeline() {
  return (
    <div className="relative flex h-[24px] items-stretch border-y-2 border-[#a80000] text-[18px] leading-none text-[#e02020] whitespace-nowrap">
      <span className="w-[351px] pl-[7px] pt-[1px] flex items-center">2020年</span>
      <span className="w-[259px] pl-[1px] pt-[1px] flex items-center border-l border-[#a80000]">1</span>
      <span className="w-[192px] pl-[1px] pt-[1px] flex items-center border-l border-[#a80000]">2</span>
      <span className="w-[295px] pl-[1px] pt-[1px] flex items-center border-l border-[#a80000]">3</span>
      <span className="w-[270px] pl-[1px] pt-[1px] flex items-center border-l border-[#a80000]">4</span>
      <span className="w-[35px] pl-[1px] pt-[1px] flex items-center border-l border-[#a80000]">5</span>
      <span className="w-[116px] flex items-center justify-center bg-[#000080] text-[#c0c0e8] text-[17.5px]">2021/05/11/二</span>
      <span className="w-[82px]"></span>
      <span className="w-[110px] pl-[1px] pt-[1px] flex items-center border-l border-[#a80000]">6</span>
      <span className="flex-1 flex items-center justify-center border-x border-[#a80000] text-[#c0c0c0] pt-[1px]">日线</span>
      <svg width="1600" height="4" className="absolute left-0 top-0" stroke="#a80000">
        {[129,204,278,416,480,545,695,754,950,1016,1079,1203,1271,1338,1517].map((x) => <line key={x} x1={x} x2={x} y1={0} y2={4} />)}
      </svg>
    </div>
  );
}

function Tabs() {
  const r1: [string, string, string?][] = [['指标','w-[46px]'],['窗口','w-[47px]'],['MACD','w-[63px]'],['VOL-TDX','w-[87px]'],['CCI','w-[43px]'],['趋势动力','w-[84px]'],['主力监控','w-[84px]'],['私募主图','w-[83px]'],['MA2','w-[47px]'],['更多','w-[48px]'],['设置','w-[48px]','c']];
  const r2: [string, string, string?][] = [['扩展∧','w-[61px]'],['关联报价','w-[84px]'],['资金分布','w-[84px]'],['综合资讯','w-[84px]','y'],['行业资讯','w-[84px]','y'],['互动问答','w-[84px]','y'],['新用户福利专享','w-[138px]']];
  const row = (r: [string, string, string?][], pt: string) => r.map(([t, w, c]) => (
    <span key={t} className={w + ' ' + pt + ' shrink-0 flex items-center justify-center border-r border-[#a80000] ' + (c === 'c' ? 'text-[#30e8e8]' : c === 'y' ? 'text-[#b8b800]' : 'text-[#c0c0c0]')}>{t}</span>
  ));
  return (
    <div className="text-[17.5px] whitespace-nowrap">
      <div className="flex h-[26px] border-b-2 border-[#a80000]">
        {row(r1, 'pt-[2px]')}
        <span className="w-[985px] border-r border-[#a80000]"></span>
        <span className="w-[45px] border-r border-[#a80000] text-[#c0c0c0] leading-none pt-[4px]">模板</span>
        <span className="w-[38px] border-r border-[#a80000]"></span>
      </div>
      <div className="flex h-[27px] border-b-2 border-[#a80000]">{row(r2, 'pt-[3px]')}</div>
    </div>
  );
}

function Status() {
  const g = 'text-[#0c8c1c] text-[20.5px] [-webkit-text-stroke:0.2px]';
  const k = 'text-[#1a1a1a] text-[20.5px] font-bold';
  const l = 'text-[#303030] text-[23.5px]';
  return (
    <div className="flex items-center h-[36px] pt-[3px] bg-[#f0f0f0] border-b-2 border-b-[#cfe0ee] whitespace-nowrap">
      <div className="w-[25px] shrink-0 pl-[3px]">
        <div className="w-[18px] h-[18px] rounded-[2px] border-2 border-[#e8a020] bg-[#ffd870] flex items-center justify-center"><div className="w-[8px] h-[8px] bg-[#f0a020]"></div></div>
      </div>
      <span className={'w-[55px] ' + l}>上证</span>
      <span className={'w-[93px] ' + g}>3569.51</span>
      <span className={'w-[81px] ' + g}>-30.03</span>
      <span className={'w-[88px] ' + g}>-0.83%</span>
      <span className={'w-[48px] ' + k}>3484</span>
      <span className={'w-[46px] ' + l}>亿</span>
      <span className={'w-[54px] ' + l}>沪深</span>
      <span className={'w-[95px] ' + g}>5214.28</span>
      <span className={'w-[81px] ' + g}>-63.35</span>
      <span className={'w-[86px] ' + g}>-1.20%</span>
      <span className={'w-[47px] ' + k}>2351</span>
      <span className={'w-[50px] ' + l}>亿</span>
      <span className={'w-[53px] ' + l}>创业</span>
      <span className={'w-[95px] ' + g}>3196.80</span>
      <span className={'w-[81px] ' + g}>-31.44</span>
      <span className={'w-[87px] ' + g}>-0.97%</span>
      <span className={'w-[47px] ' + k}>1505</span>
      <span className={'w-[50px] ' + l}>亿</span>
      <span className="h-[30px] border-l border-[#a0a0a0] mr-[3px]"></span>
      <span className={'w-[79px] ' + l}>总成交</span>
      <span className={k}>7</span>
    </div>
  );
}

function Watermark() {
  return (
    <div className="absolute left-[1360px] top-[1314px] w-[800px] h-[81px] bg-[#7faad9] flex items-center whitespace-nowrap">
      <span className="ml-[17px] w-[288px] text-[55px] leading-none font-bold text-[#1a0e8c] [-webkit-text-stroke:1.5px_#1a0e8c]">公式指标网</span>
      <svg width="80" height="80" viewBox="0 0 80 80" className="ml-[16px] shrink-0">
        <path d="M7 42 A33 33 0 0 1 73 42" fill="none" stroke="#d96a52" strokeWidth="8" />
        <path d="M7 46 A33 33 0 0 0 38 77" fill="none" stroke="#ecc84a" strokeWidth="8" />
        <path d="M73 46 A33 33 0 0 1 42 77" fill="none" stroke="#ecc84a" strokeWidth="8" />
        <path d="M33 2 H47 L44 14 H52 V48 H46 V74 H34 V48 H28 V14 H36 Z" fill="#ecc84a" />
        <path d="M34 24 H46 M34 36 H46 M33 58 H47" stroke="#7faad9" strokeWidth="3" />
        <path id="wmtxt" d="M7 50 A34 34 0 0 0 34 78" fill="none" />
        <text fontSize="7" fill="#fff"><textPath href="#wmtxt">www.9m8.cn</textPath></text>
      </svg>
      <span className="ml-[26px] font-['DejaVu_Serif',serif] font-bold text-[47px] tracking-[3.5px] leading-none text-white [-webkit-text-stroke:1px_#fff]">www.9m8.cn</span>
    </div>
  );
}

function Upload() {
  return (
    <div className="absolute left-[1844px] top-[43px] w-[156px] h-[37px] rounded-[4px] border border-[#1c8ff0] flex overflow-hidden">
      <div className="w-[44px] bg-[#1c8ff0] flex items-center justify-center">
        <svg width="32" height="28" viewBox="0 0 32 28" fill="none" stroke="#fff" strokeWidth="3.5"><circle cx="16" cy="9" r="5.5" /><circle cx="8" cy="19" r="5.5" /><circle cx="24" cy="19" r="5.5" /></svg>
      </div>
      <div className="flex-1 flex items-center justify-center bg-gradient-to-b from-[#e6f6fe] to-[#bfe4fb] text-[18px] text-[#58b0ec]">拖拽上传</div>
    </div>
  );
}

export default function App() {
  return (
    <div className="relative w-[2160px] h-[1395px] overflow-hidden bg-black font-['Liberation_Sans','Noto_Sans_CJK_SC',sans-serif]">
      <TitleBar />
      <div className="flex h-[1323px]">
        <div className="w-[1788px] shrink-0 flex flex-col">
          <Toolbar />
          <Chart />
          <Timeline />
          <Tabs />
        </div>
        <RightPanel />
        <Sidebar />
      </div>
      <Status />
      <Upload />
      <Watermark />
    </div>
  );
}
